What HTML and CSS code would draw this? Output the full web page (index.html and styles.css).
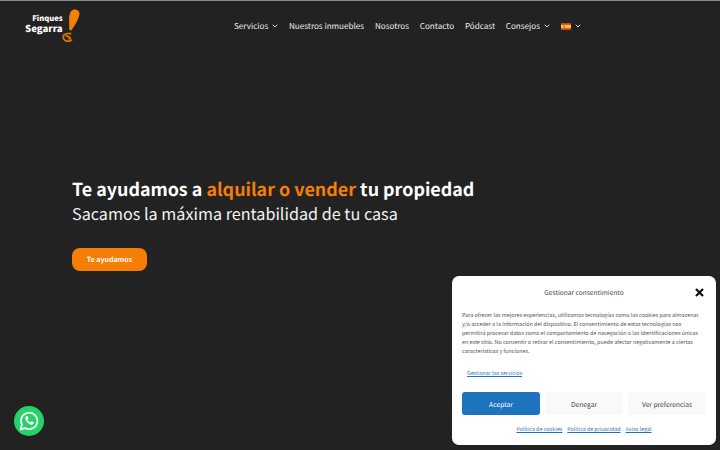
FILE: index.html
```html
<!DOCTYPE html>
<html lang="es">
<head>
<meta charset="utf-8">
<title>Finques Segarra</title>
<link rel="stylesheet" href="styles.css">
</head>
<body>
<div class="topline"></div>
<header class="header">
  <a class="logo" href="#">
    <span class="logo-text"><span class="logo-a">Finques</span><span class="logo-b">Segarra</span></span>
    <svg class="logo-mark" width="18" height="33" viewBox="0 0 18 33">
      <path d="M11 .8C15 -.4 18 1.8 17.4 5.6C16.8 10 12.6 17 9.4 21.4L7.2 20.8C7.4 15.6 6.6 10 7.6 5.6C8 3.4 9.4 1.4 11 .8Z" fill="#f57e07"/>
      <path d="M9.4 24.6H5Q1.6 25 1.2 27.6Q1 31 5 32.2Q8.6 32.6 10 30.4M3.6 26.6 8 28.4Q8.6 29.6 6.4 30" fill="none" stroke="#d96f08" stroke-width="1.8"/>
    </svg>
  </a>
  <nav class="nav">
    <a href="#">Servicios<svg class="chev" width="6" height="4" viewBox="0 0 6 4"><path d="M.7.7 3 3 5.3.7" fill="none" stroke="#ddd" stroke-width="1"/></svg></a>
    <a href="#">Nuestros inmuebles</a>
    <a href="#">Nosotros</a>
    <a href="#">Contacto</a>
    <a href="#">Pódcast</a>
    <a href="#">Consejos<svg class="chev" width="6" height="4" viewBox="0 0 6 4"><path d="M.7.7 3 3 5.3.7" fill="none" stroke="#ddd" stroke-width="1"/></svg></a>
    <a href="#" class="lang"><svg class="flag" width="10" height="7" viewBox="0 0 10 7"><rect width="10" height="7" fill="#c8402a"/><rect y="1.8" width="10" height="3.4" fill="#f3c23c"/><rect x="2.5" y="2.6" width="1.6" height="1.8" fill="#c8602a"/></svg><svg class="chev" width="6" height="4" viewBox="0 0 6 4"><path d="M.7.7 3 3 5.3.7" fill="none" stroke="#ddd" stroke-width="1"/></svg></a>
  </nav>
</header>
<main class="hero">
  <h1 class="title">Te ayudamos a <span class="accent">alquilar o vender</span> tu propiedad</h1>
  <p class="subtitle">Sacamos la máxima rentabilidad de tu casa</p>
  <a class="cta" href="#">Te ayudamos</a>
</main>
<a class="whatsapp" href="#" aria-label="WhatsApp">
  <svg width="30" height="30" viewBox="0 0 30 30">
    <circle cx="15" cy="15" r="15" fill="#25d366"/>
    <path d="M6.6 23.4 7.9 18.7A8.2 8.2 0 1 1 11.2 22.1Z" fill="none" stroke="#fff" stroke-width="1.7" stroke-linejoin="round"/>
    <path d="M12.3 10.3C11.3 10.9 11 12.1 11.5 13.5C12.3 15.7 14.3 17.7 16.6 18.5C18 19 19.2 18.6 19.7 17.6C20 17 19.9 16.5 19.5 16.3L17.9 15.5C17.5 15.3 17.2 15.4 17 15.7L16.5 16.3C15.1 15.8 14.1 14.8 13.6 13.5L14.2 12.9C14.5 12.6 14.5 12.3 14.4 12L13.7 10.5C13.5 10 12.8 10 12.3 10.3Z" fill="#fff"/>
  </svg>
</a>
<aside class="consent">
  <div class="consent-head">
    <div class="consent-title">Gestionar consentimiento</div>
    <svg class="close" width="9" height="9" viewBox="0 0 9 9"><path d="M1 1 8 8M8 1 1 8" stroke="#111" stroke-width="2.2"/></svg>
  </div>
  <p class="consent-text">Para ofrecer las mejores experiencias, utilizamos tecnologías como las cookies para almacenar y/o acceder a la información del dispositivo. El consentimiento de estas tecnologías nos permitirá procesar datos como el comportamiento de navegación o las identificaciones únicas en este sitio. No consentir o retirar el consentimiento, puede afectar negativamente a ciertas características y funciones.</p>
  <a class="manage" href="#">Gestionar los servicios</a>
  <div class="buttons">
    <a class="btn btn-primary" href="#">Aceptar</a>
    <a class="btn" href="#">Denegar</a>
    <a class="btn" href="#">Ver preferencias</a>
  </div>
  <div class="links">
    <a href="#">Política de cookies</a>
    <a href="#">Política de privacidad</a>
    <a href="#">Aviso legal</a>
  </div>
</aside>
</body>
</html>
```
FILE: styles.css
```css
* { box-sizing: border-box; }
html, body { height: 100%; }
body {
  margin: 0;
  height: 450px;
  overflow: hidden;
  background: #222222;
  color: #fff;
  font-family: "Noto Sans CJK JP", "Noto Sans", sans-serif;
  text-rendering: geometricPrecision;
}
a { text-decoration: none; color: inherit; }
.topline { height: 1px; background: #8a8a8a; }
.header {
  height: 50px;
  display: flex;
  align-items: center;
  padding-left: 25px;
}
.logo { display: flex; align-items: flex-start; width: 209px; height: 33px; margin-top: -2px; }
.logo-text {
  display: flex;
  flex-direction: column;
  align-items: flex-end;
  font-weight: 900;
  padding-top: 5px;
}
.logo-a { font-size: 7.6px; line-height: 9px; }
.logo-b { font-size: 9.6px; line-height: 10px; }
.logo-mark { margin-left: -1px; }
.nav {
  display: flex;
  align-items: center;
  gap: 10.8px;
  font-size: 8.1px;
  color: #eee;
}
.nav a { display: flex; align-items: center; gap: 4px; }
.nav .lang { gap: 4px; }
.hero { padding: 126px 0 0 72px; }
.title {
  margin: 0;
  font-size: 17.9px;
  line-height: 24px;
  font-weight: 700;
  white-space: nowrap;
}
.accent { color: #f57e07; }
.subtitle {
  margin: 0;
  font-size: 16.2px;
  line-height: 24px;
  font-weight: 400;
  color: #f2f2f2;
}
.cta {
  display: flex;
  width: 75px;
  height: 23px;
  margin-top: 23px;
  align-items: center;
  justify-content: center;
  background: #f57e07;
  border-radius: 8px;
  font-size: 7px;
  font-weight: 700;
}
.whatsapp { position: fixed; left: 14px; top: 406px; width: 30px; height: 30px; display: block; }
.whatsapp svg { display: block; }
.consent {
  position: fixed;
  left: 452px;
  top: 276px;
  width: 264px;
  height: 169px;
  background: #fff;
  border-radius: 7px;
  color: #444;
  padding: 0 10px;
  display: flex;
  flex-direction: column;
}
.consent-head {
  position: relative;
  height: 32px;
  display: flex;
  align-items: center;
  justify-content: center;
}
.consent-title { font-size: 6.6px; color: #444; }
.close { position: absolute; right: 2px; top: 12px; }
.consent-text {
  margin: 3px 0 0;
  padding-right: 1.5px;
  font-size: 5.42px;
  line-height: 9px;
  color: #555;
}
.manage {
  margin: 13px 0 0 5px;
  font-size: 5.3px;
  line-height: 9px;
  color: #1e73be;
  text-decoration: underline;
}
.buttons { display: flex; gap: 5px; margin-top: 14px; }
.btn {
  flex: 1;
  height: 23px;
  display: flex;
  align-items: center;
  justify-content: center;
  border-radius: 3px;
  background: #f9f9f9;
  font-size: 6.7px;
  color: #444;
}
.btn-primary { background: #1e73be; color: #fff; }
.links {
  display: flex;
  justify-content: center;
  gap: 5px;
  margin-top: 10px;
  font-size: 5.3px;
  line-height: 9px;
  color: #1e73be;
}
.links a { text-decoration: underline; }
```
